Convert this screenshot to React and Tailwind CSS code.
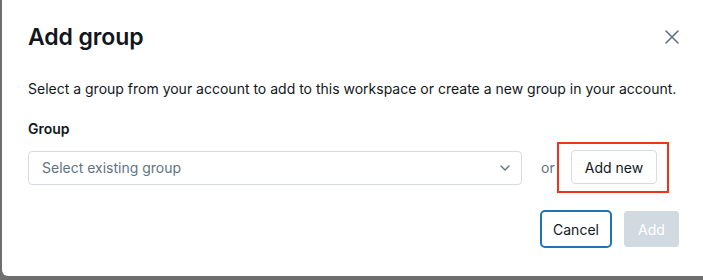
import React from "react";

export default function App() {
  return (
    <div className="w-[703px] h-[280px] bg-[#6f6f6f] overflow-hidden relative" style={{ fontFamily: "Inter, 'Noto Sans', sans-serif" }}>
      <div className="absolute left-[2px] top-0 w-[720px] h-[276px] bg-white rounded-bl-[6px]">
        <div className="w-[701px] pl-[26px] pr-[24px]">
          <div className="flex items-center justify-between h-[74px]">
            <h1 className="text-[23px] font-semibold text-[#11171c] tracking-[-0.1px]">Add group</h1>
            <svg width="14" height="14" viewBox="0 0 14 14">
              <path d="M1 1L13 13M13 1L1 13" stroke="#5f7385" strokeWidth="1.6" strokeLinecap="round" />
            </svg>
          </div>
          <p className="text-[14px] text-[#11171c] mt-[5px] leading-[20px] whitespace-nowrap">Select a group from your account to add to this workspace or create a new group in your account.</p>
          <div className="text-[14px] font-semibold text-[#11171c] mt-[20px] leading-[20px]">Group</div>
          <div className="flex items-center mt-[3px]">
            <div className="shrink-0 w-[494px] h-[34px] border border-[#d4dbe2] rounded-[4px] flex items-center justify-between pl-[13px] pr-[11px]">
              <span className="text-[14px] text-[#5f7385]">Select existing group</span>
              <svg width="10" height="6" viewBox="0 0 10 6">
                <path d="M1 1L5 5L9 1" stroke="#5f7385" strokeWidth="1.4" fill="none" strokeLinecap="round" strokeLinejoin="round" />
              </svg>
            </div>
            <span className="shrink-0 w-[16px] text-[14px] text-[#5f7385] ml-[19px]">or</span>
            <div className="shrink-0 border-2 border-[#f1331c] pl-[12px] pr-[10px] pt-[6px] pb-[7px]">
              <button className="block h-[34px] w-[86px] border border-[#d4dbe2] rounded-[4px] text-[14px] text-[#11171c] bg-white">Add new</button>
            </div>
          </div>
          <div className="flex justify-end gap-[12px] mt-[17px]">
            <button className="h-[38px] w-[72px] border-2 border-[#2272b4] rounded-[5px] text-[14px] text-[#11171c] bg-white">Cancel</button>
            <button className="h-[36px] w-[55px] mt-[1px] rounded-[4px] bg-[#d1d9e1] text-[14px] text-white">Add</button>
          </div>
        </div>
      </div>
    </div>
  );
}
